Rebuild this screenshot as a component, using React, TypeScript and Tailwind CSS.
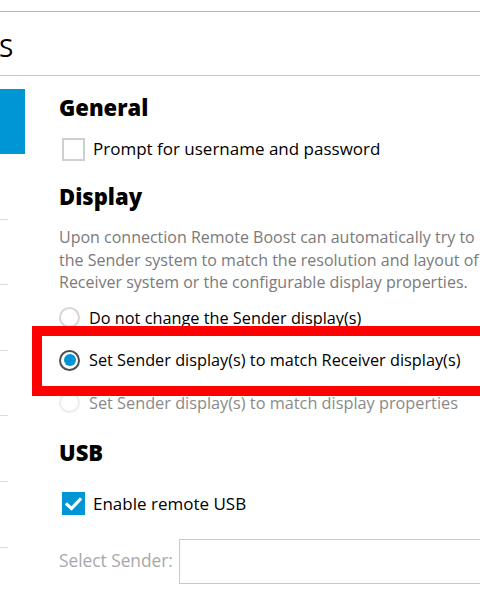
import React from 'react';

const navRows = [0, 1, 2, 3, 4, 5];

function Radio({ checked, faded }: { checked?: boolean; faded?: boolean }) {
  if (checked) {
    return (
      <span className="w-[21px] h-[21px] rounded-full border-2 border-[#4d4d4d] flex items-center justify-center bg-white shrink-0">
        <span className="w-[12px] h-[12px] rounded-full bg-[#0096d6]" />
      </span>
    );
  }
  return (
    <span
      className={`w-[21px] h-[21px] rounded-full border-2 bg-white shrink-0 ${
        faded ? 'border-[#ececec]' : 'border-[#d6d6d6]'
      }`}
    />
  );
}

export default function App() {
  return (
    <div
      className="w-[480px] h-[596px] overflow-hidden bg-white relative text-black"
      style={{ fontFamily: '"Open Sans", "Noto Sans", sans-serif' }}
    >
      {/* window top */}
      <div className="h-[11px]" />
      <div className="h-px bg-[#b3bd9a]" />
      <header className="h-[64px] flex items-center border-b border-[#c6c6c6]">
        <span className="text-[26px] leading-none ml-[-1px] mt-[7px]">S</span>
      </header>

      <div className="flex">
        {/* sidebar */}
        <aside className="w-[25px] shrink-0 pt-[13px]">
          <div className="h-[65px] bg-[#0096d6]" />
          {navRows.map((r) => (
            <div key={r} className="h-[65.6px] flex items-end">
              <div className="w-[8px] h-px bg-[#dcdcdc]" />
            </div>
          ))}
        </aside>

        {/* content */}
        <main className="pl-[34px] pt-[16px] flex-1 whitespace-nowrap">
          <h2 className="text-[22px] font-extrabold leading-[30px]">General</h2>
          <label className="flex items-center gap-[8px] mt-[15px] ml-[3px]">
            <span className="w-[23px] h-[23px] border-2 border-[#cfcfcf] bg-white shrink-0" />
            <span className="text-[17px] leading-[24px]">Prompt for username and password</span>
          </label>

          <h2 className="text-[22px] font-extrabold leading-[30px] mt-[20px]">Display</h2>
          <p className="text-[16px] leading-[22.5px] text-[#7a7a7a] mt-[15px]">
            Upon connection Remote Boost can automatically try to
            <br />
            the Sender system to match the resolution and layout of
            <br />
            Receiver system or the configurable display properties.
          </p>

          <div className="mt-[13px] flex flex-col gap-[20.5px]">
            <label className="flex items-center gap-[9px] h-[22px]">
              <Radio />
              <span className="text-[16.3px] leading-[22px]">Do not change the Sender display(s)</span>
            </label>
            <label className="flex items-center gap-[9px] h-[22px]">
              <Radio checked />
              <span className="text-[16.3px] leading-[22px]">Set Sender display(s) to match Receiver display(s)</span>
            </label>
            <label className="flex items-center gap-[9px] h-[22px]">
              <Radio faded />
              <span className="text-[16.3px] leading-[22px] text-[#8a8a8a]">Set Sender display(s) to match display properties</span>
            </label>
          </div>

          <h2 className="text-[22px] font-extrabold leading-[30px] mt-[23px]">USB</h2>
          <label className="flex items-center gap-[8px] mt-[25px] ml-[3px]">
            <span className="w-[23px] h-[23px] bg-[#0096d6] flex items-center justify-center shrink-0">
              <svg width="17" height="14" viewBox="0 0 17 14">
                <path d="M2 7.5 L6.5 11.5 L15 2.5" stroke="white" strokeWidth="3.2" fill="none" strokeLinecap="square" />
              </svg>
            </span>
            <span className="text-[17px] leading-[24px]">Enable remote USB</span>
          </label>

          <div className="flex items-center mt-[23px] gap-[6px]">
            <span className="text-[17.3px] text-[#a8a8a8]">Select Sender:</span>
            <div className="w-[320px] h-[45px] border border-[#c8c8c8] bg-white" />
          </div>
        </main>
      </div>

      {/* annotation highlight */}
      <div className="absolute left-[32px] top-[326px] w-[480px] h-[70px] border-[10px] border-[#ff0000] pointer-events-none" />
    </div>
  );
}
